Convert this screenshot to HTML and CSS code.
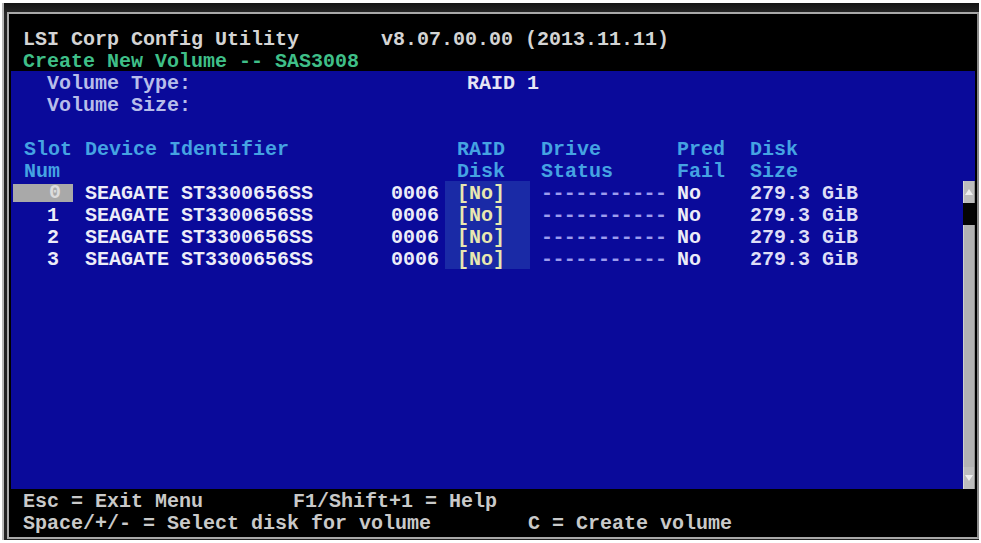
FILE: index.html
```html
<!DOCTYPE html>
<html lang="en">
<head>
<meta charset="utf-8">
<title>LSI Corp Config Utility</title>
<link rel="stylesheet" href="styles.css">
</head>
<body>
<div class="frame">
  <div class="screen">
    <header class="top">
      <div class="row">
        <span class="title">LSI Corp Config Utility</span><span class="title-ver">v8.07.00.00 (2013.11.11)</span>
      </div>
      <div class="row">
        <span class="subtitle">Create New Volume -- SAS3008</span>
      </div>
    </header>

    <main class="panel">
      <div class="panel-body">
        <div class="row vol-row">
          <span class="vol-label">Volume Type:</span><span class="vol-value">RAID 1</span>
        </div>
        <div class="row vol-row">
          <span class="vol-label">Volume Size:</span><span class="vol-value"></span>
        </div>
        <div class="row"></div>

        <div class="disk-table">
          <div class="row cols head">
            <span class="c-slot">Slot</span>
            <span class="c-dev">Device Identifier</span>
            <span class="c-rev"></span>
            <span class="c-raid">RAID</span>
            <span class="c-drive">Drive</span>
            <span class="c-pred">Pred</span>
            <span class="c-size">Disk</span>
          </div>
          <div class="row cols head">
            <span class="c-slot">Num</span>
            <span class="c-dev"></span>
            <span class="c-rev"></span>
            <span class="c-raid">Disk</span>
            <span class="c-drive">Status</span>
            <span class="c-pred">Fail</span>
            <span class="c-size">Size</span>
          </div>

          <div class="row cols disk">
            <span class="c-num is-current"><span>0</span></span>
            <span class="c-dev">SEAGATE ST3300656SS</span>
            <span class="c-rev">0006</span>
            <span class="c-raid field">[No]</span>
            <span class="c-drive dashes">-----------</span>
            <span class="c-pred">No</span>
            <span class="c-size">279.3 GiB</span>
          </div>
          <div class="row cols disk">
            <span class="c-num"><span>1</span></span>
            <span class="c-dev">SEAGATE ST3300656SS</span>
            <span class="c-rev">0006</span>
            <span class="c-raid field">[No]</span>
            <span class="c-drive dashes">-----------</span>
            <span class="c-pred">No</span>
            <span class="c-size">279.3 GiB</span>
          </div>
          <div class="row cols disk">
            <span class="c-num"><span>2</span></span>
            <span class="c-dev">SEAGATE ST3300656SS</span>
            <span class="c-rev">0006</span>
            <span class="c-raid field">[No]</span>
            <span class="c-drive dashes">-----------</span>
            <span class="c-pred">No</span>
            <span class="c-size">279.3 GiB</span>
          </div>
          <div class="row cols disk">
            <span class="c-num"><span>3</span></span>
            <span class="c-dev">SEAGATE ST3300656SS</span>
            <span class="c-rev">0006</span>
            <span class="c-raid field">[No]</span>
            <span class="c-drive dashes">-----------</span>
            <span class="c-pred">No</span>
            <span class="c-size">279.3 GiB</span>
          </div>
        </div>
      </div>

      <div class="scrollbar">
        <div class="sb-btn sb-up"><svg width="8" height="6" viewBox="0 0 8 6"><path d="M4 0 L8 6 L0 6 Z" fill="#eeeeee"/></svg></div>
        <div class="sb-thumb"></div>
        <div class="sb-track"></div>
        <div class="sb-btn sb-down"><svg width="8" height="6" viewBox="0 0 8 6"><path d="M0 0 L8 0 L4 6 Z" fill="#eeeeee"/></svg></div>
      </div>
    </main>

    <footer class="bottom">
      <div class="row">
        <span class="key-a">Esc = Exit Menu</span><span>F1/Shift+1 = Help</span>
      </div>
      <div class="row">
        <span class="key-b">Space/+/- = Select disk for volume</span><span>C = Create volume</span>
      </div>
    </footer>
  </div>
</div>
</body>
</html>
```

FILE: styles.css
```css
* {
  box-sizing: border-box;
}

html, body {
  margin: 0;
  padding: 0;
  background: #ffffff;
}

body {
  width: 981px;
  height: 543px;
  overflow: hidden;
  font-family: "Liberation Mono", "DejaVu Sans Mono", monospace;
  font-weight: bold;
  font-size: 20px;
}

/* monitor bezel around the console */
.frame {
  margin: 3px 2px 0 2px;
  height: 537px;
  background: linear-gradient(#141414, #262626 10px, #222222);
  border-left: 2px solid #b9b9b9;
  padding: 9px 0 1px 3px;
}

.screen {
  height: 527px;
  border: 2px solid #a9a9a9;
  border-right-color: #8a8a8a;
  background: #000000;
  padding: 13px 2px 4px 2px;
  display: flex;
  flex-direction: column;
}

/* one text-mode character row */
.row {
  height: 22px;
  padding-top: 3px;
  line-height: 19px;
  white-space: pre;
  display: flex;
}

.top .row,
.bottom .row {
  padding-left: 12px;
}

.title {
  width: 358px;
  color: #d4d4d4;
}

.title-ver {
  color: #d4d4d4;
}

.subtitle {
  color: #3fbf88;
}

/* blue working area */
.panel {
  height: 418px;
  width: 964px;
  background: #0a0a9a;
  display: flex;
}

.panel-body {
  flex: 1;
}

.vol-row {
  padding-left: 36px;
}

.vol-label {
  width: 420px;
  color: #b7bdea;
}

.vol-value {
  color: #e4e4f4;
}

.cols {
  padding-top: 0;
  align-items: stretch;
}

.cols > span {
  padding-top: 3px;
  flex: none;
}

.c-slot,
.c-num {
  width: 60px;
}

.c-slot {
  padding-left: 13px;
}

.c-num {
  display: flex;
  justify-content: flex-end;
  padding-right: 12px;
}

.c-dev {
  width: 306px;
  margin-left: 14px;
}

.c-rev {
  width: 54px;
}

.c-raid {
  width: 85px;
  padding-left: 12px;
}

.c-drive {
  width: 147px;
  padding-left: 11px;
}

.c-pred {
  width: 73px;
}

.c-size {
  width: 180px;
}

.head > span {
  color: #45a3e2;
}

.disk > span {
  color: #ececf8;
}

.disk .c-raid {
  background: #1a2aa6;
}

.disk .field {
  color: #e8e8b0;
}

.disk .dashes {
  color: #9c9cee;
  letter-spacing: -0.6px;
}

.disk .c-size {
  color: #dedef6;
}

/* highlighted slot cursor */
.c-num.is-current {
  background: #a9a9a9;
  color: #dcdcdc;
  margin: 3px 0 1px 2px;
  padding-top: 0;
  line-height: 17px;
  width: 60px;
}

.c-num.is-current + .c-dev {
  margin-left: 12px;
}

/* vertical scroll bar on the right edge */
.scrollbar {
  width: 12px;
  margin-top: 110px;
  display: flex;
  flex-direction: column;
}

.sb-btn {
  height: 22px;
  background: #bdbdbd;
  border-left: 1px solid #d8d8d8;
  border-right: 1px solid #8e8e8e;
  display: flex;
  align-items: center;
  justify-content: center;
}

.sb-thumb {
  height: 22px;
  background: #050505;
}

.sb-track {
  flex: 1;
  background: #b3b3b3;
  border-left: 1px solid #cfcfcf;
  border-right: 1px solid #8e8e8e;
}

/* key help lines */
.bottom {
  color: #c9c9c9;
}

.key-a {
  width: 270px;
}

.key-b {
  width: 505px;
}
```
